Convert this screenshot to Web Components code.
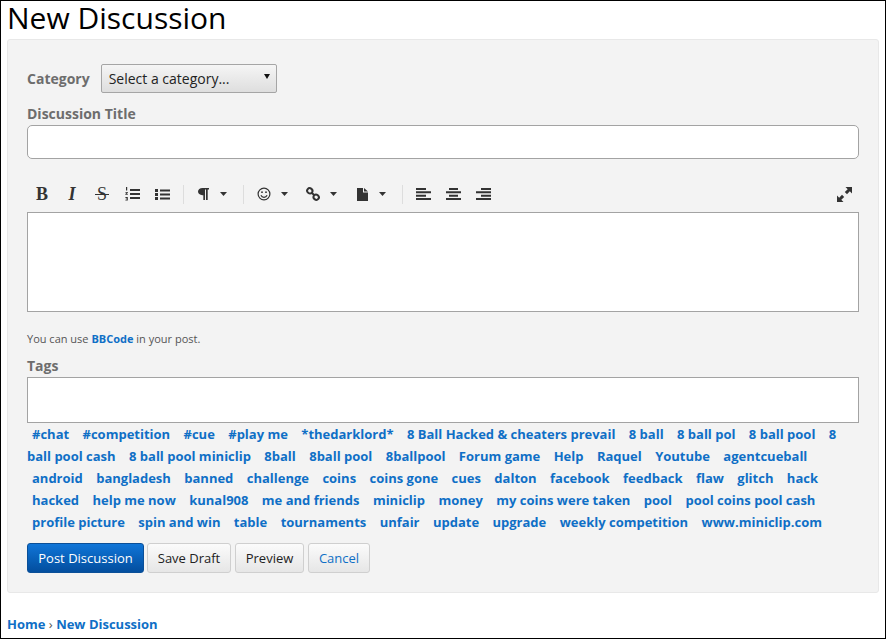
<!DOCTYPE html>
<html>
<head>
<meta charset="utf-8">
<title>New Discussion</title>
<style>
    html, body { margin: 0; height: 100%; }
    body { font-family: "Open Sans", sans-serif; color: #000; background: #fff; }
</style>
</head>
<body>
<discussion-page>
    <discussion-form>
        <category-picker></category-picker>
        <field-label>Discussion Title</field-label>
        <title-input></title-input>
        <editor-toolbar></editor-toolbar>
        <post-editor></post-editor>
        <bb-note></bb-note>
        <field-label>Tags</field-label>
        <tag-box></tag-box>
        <tag-list></tag-list>
        <form-buttons></form-buttons>
    </discussion-form>
    <bread-crumbs></bread-crumbs>
</discussion-page>
<script>
const LINK = '#0f6fc6';

class DiscussionPage extends HTMLElement {
    constructor() {
        super();
        this.attachShadow({ mode: 'open' });
        this.shadowRoot.innerHTML = `
            <style>
                :host { display: block; box-sizing: border-box; height: 639px; border: 1px solid #000; padding: 0 6px; overflow: hidden; }
                h1 { margin: 0; height: 38px; font-size: 30px; line-height: 33px; font-weight: 400; color: #000; }
            </style>
            <h1>New Discussion</h1>
            <slot></slot>`;
    }
}

class DiscussionForm extends HTMLElement {
    constructor() {
        super();
        this.attachShadow({ mode: 'open' });
        this.shadowRoot.innerHTML = `
            <style>
                :host { display: block; box-sizing: border-box; width: 872px; height: 554px; padding: 24px 19px 0; background: #f3f3f3; border: 1px solid #e8e8e8; border-radius: 3px; }
            </style>
            <slot></slot>`;
    }
}

class FieldLabel extends HTMLElement {
    constructor() {
        super();
        this.attachShadow({ mode: 'open' });
        this.shadowRoot.innerHTML = `
            <style>
                :host { display: block; margin-bottom: 1px; font-size: 14px; font-weight: 700; line-height: 20px; color: #6d6d6d; }
            </style>
            <slot></slot>`;
    }
}

class CategoryPicker extends HTMLElement {
    constructor() {
        super();
        this.attachShadow({ mode: 'open' });
        this.shadowRoot.innerHTML = `
            <style>
                :host { display: flex; align-items: center; gap: 11px; height: 29px; margin-bottom: 11px; font-size: 14px; }
                label { font-weight: 700; color: #6d6d6d; }
                .wrap { position: relative; display: block; width: 176px; height: 29px; }
                .wrap::after { content: ""; position: absolute; left: 163px; top: 10px; border: 3px solid transparent; border-top: 5px solid #111; border-bottom: 0; }
                select {
                    appearance: none; display: block;
                    box-sizing: border-box; width: 176px; height: 29px; padding: 0 7px;
                    font: 14px "Open Sans", sans-serif; color: #222;
                    background: linear-gradient(#f5f5f5, #dedede);
                    border: 1px solid #a5a5a5; border-radius: 2px;
                }
            </style>
            <label>Category</label>
            <span class="wrap"><select><option>Select a category...</option></select></span>`;
    }
}

class TitleInput extends HTMLElement {
    constructor() {
        super();
        this.attachShadow({ mode: 'open' });
        this.shadowRoot.innerHTML = `
            <style>
                :host { display: block; height: 34px; margin-bottom: 17px; }
                input { display: block; box-sizing: border-box; width: 100%; height: 34px; background: #fff; border: 1px solid #a3a3a3; border-radius: 5px; outline: 0; }
            </style>
            <input type="text">`;
    }
}

const caret = `<svg width="7" height="4" viewBox="0 0 7 4"><path d="M0 0h7L3.500 4z" fill="#333"/></svg>`;

const ICONS = {
    ol: `<svg width="15" height="14" viewBox="0 0 15 14" fill="#333"><path d="M5 2h10v2H5zM5 6h10v2H5zM5 10h10v2H5z"/><path d="M1 0h1.200v3.500H1zM.4 5h2.400v.9l-1.200 1h1.200v.8H.3V7l1.400-1.200H.4zM.4 10h2.400v3.600H.4v-.8h1.500v-.6H.8v-.7h1.100v-.6H.4z"/></svg>`,
    ul: `<svg width="15" height="11" viewBox="0 0 15 11" fill="#333"><path d="M5 .5h10v2H5zM5 4.500h10v2H5zM5 8.500h10v2H5z"/><path d="M0 0h3v3H0zM0 4h3v3H0zM0 8h3v3H0z"/></svg>`,
    para: `<svg width="11" height="12" viewBox="0 0 11 12" fill="#333"><path d="M4.500 0H11v1.600H9.700V12H8V1.600H7V12H5.300V7.200H4.500C1.800 7.200 0 5.700 0 3.600S1.800 0 4.500 0z"/></svg>`,
    smile: `<svg width="14" height="14" viewBox="0 0 14 14" fill="none" stroke="#333" stroke-width="1.200"><circle cx="7" cy="7" r="5.900"/><path d="M3.900 8.300C4.600 9.800 5.700 10.400 7 10.400s2.400-.6 3.100-2.100"/><circle cx="5" cy="5.200" r=".9" fill="#333" stroke="none"/><circle cx="9" cy="5.200" r=".9" fill="#333" stroke="none"/></svg>`,
    link: `<svg width="14" height="14" viewBox="0 0 14 14" fill="none" stroke="#333" stroke-width="2"><ellipse cx="3.800" cy="3.800" rx="2.700" ry="2.500" transform="rotate(40 3.800 3.800)"/><ellipse cx="10.200" cy="10.200" rx="2.700" ry="2.500" transform="rotate(40 10.200 10.200)"/><path d="M5.500 5.500l3 3"/></svg>`,
    file: `<svg width="11" height="13" viewBox="0 0 11 13" fill="#333"><path d="M0 0h6v4.500h5V13H0zM7 0l4 3.500H7z"/></svg>`,
    left: `<svg width="15" height="12" viewBox="0 0 15 12" fill="#333"><path d="M0 0h10v2H0zM0 3.300h15v2H0zM0 6.700h10v2H0zM0 10h15v2H0z"/></svg>`,
    center: `<svg width="15" height="12" viewBox="0 0 15 12" fill="#333"><path d="M3 0h9v2H3zM0 3.300h15v2H0zM3 6.700h9v2H3zM0 10h15v2H0z"/></svg>`,
    right: `<svg width="15" height="12" viewBox="0 0 15 12" fill="#333"><path d="M5 0h10v2H5zM0 3.300h15v2H0zM5 6.700h10v2H5zM0 10h15v2H0z"/></svg>`,
    expand: `<svg width="15" height="15" viewBox="0 0 15 15" fill="#333"><path d="M8.500 0H15v6.500L12.800 4.300 10 7.200 7.800 5l2.900-2.800zM6.500 15H0V8.500l2.200 2.200L5 7.800 7.200 10l-2.900 2.800z"/></svg>`
};

const drop = (icon, style = '') =>
    `<span class="d" style="${style}"><span class="ic">${icon}</span>${caret}</span>`;

class EditorToolbar extends HTMLElement {
    constructor() {
        super();
        this.attachShadow({ mode: 'open' });
        this.shadowRoot.innerHTML = `
            <style>
                :host { display: flex; align-items: center; height: 36px; color: #333; }
                .t { display: flex; align-items: center; justify-content: center; width: 30px; height: 20px; flex: none; }
                .g { font: 18px/20px "Liberation Serif", serif; color: #333; }
                .b { font-weight: 700; }
                .i { font-style: italic; font-weight: 700; }
                .s { position: relative; }
                .s::after { content: ""; position: absolute; left: 8px; top: 10px; width: 14px; height: 1px; background: #333; }
                .d { display: flex; align-items: center; height: 20px; width: 49px; flex: none; }
                .ic { display: flex; align-items: center; justify-content: center; width: 40px; margin-right: -3.500px; }
                .sep { width: 1px; height: 19px; background: #ddd; flex: none; }
                .sp { flex: 1; }
            </style>
            <span class="t g b">B</span>
            <span class="t g i">I</span>
            <span class="t g s">S</span>
            <span class="t">${ICONS.ol}</span>
            <span class="t">${ICONS.ul}</span>
            <span class="sep" style="margin-left:6px"></span>
            ${drop(ICONS.para, 'margin-left:-1px;margin-right:11px')}
            <span class="sep"></span>
            ${drop(ICONS.smile)}
            ${drop(ICONS.link)}
            ${drop(ICONS.file, 'margin-right:11px')}
            <span class="sep" style="margin-right:5px"></span>
            <span class="t">${ICONS.left}</span>
            <span class="t">${ICONS.center}</span>
            <span class="t">${ICONS.right}</span>
            <span class="sp"></span>
            <span class="t">${ICONS.expand}</span>`;
    }
}

class PostEditor extends HTMLElement {
    constructor() {
        super();
        this.attachShadow({ mode: 'open' });
        this.shadowRoot.innerHTML = `
            <style>
                :host { display: block; height: 100px; margin-bottom: 19px; }
                textarea { display: block; box-sizing: border-box; width: 100%; height: 100px; background: #fff; border: 1px solid #a3a3a3; border-radius: 0; outline: 0; resize: none; }
            </style>
            <textarea></textarea>`;
    }
}

class BbNote extends HTMLElement {
    constructor() {
        super();
        this.attachShadow({ mode: 'open' });
        this.shadowRoot.innerHTML = `
            <style>
                :host { display: block; height: 15px; margin-bottom: 10px; font-size: 11px; line-height: 15px; color: #555; }
                a { color: ${LINK}; font-weight: 700; text-decoration: none; }
            </style>
            You can use <a href="#">BBCode</a> in your post.`;
    }
}

class TagBox extends HTMLElement {
    constructor() {
        super();
        this.attachShadow({ mode: 'open' });
        this.shadowRoot.innerHTML = `
            <style>
                :host { display: block; box-sizing: border-box; height: 46px; background: #fff; border: 1px solid #a3a3a3; }
            </style>`;
    }
}

const TAGS = ['#chat', '#competition', '#cue', '#play me', '*thedarklord*', '8 Ball Hacked & cheaters prevail',
    '8 ball', '8 ball pol', '8 ball pool', '8 ball pool cash', '8 ball pool miniclip', '8ball', '8ball pool',
    '8ballpool', 'Forum game', 'Help', 'Raquel', 'Youtube', 'agentcueball', 'android', 'bangladesh', 'banned',
    'challenge', 'coins', 'coins gone', 'cues', 'dalton', 'facebook', 'feedback', 'flaw', 'glitch', 'hack',
    'hacked', 'help me now', 'kunal908', 'me and friends', 'miniclip', 'money', 'my coins were taken', 'pool',
    'pool coins pool cash', 'profile picture', 'spin and win', 'table', 'tournaments', 'unfair', 'update',
    'upgrade', 'weekly competition', 'www.miniclip.com'];

class TagList extends HTMLElement {
    constructor() {
        super();
        this.attachShadow({ mode: 'open' });
        const links = TAGS.map(t => `<a href="#">${t.replace('&', '&amp;')}</a>`).join('\n');
        this.shadowRoot.innerHTML = `
            <style>
                :host { display: block; height: 110px; margin-bottom: 10px; font-size: 13px; line-height: 22px; }
                a { padding: 0 5px; color: ${LINK}; font-weight: 700; text-decoration: none; }
            </style>
            ${links}`;
    }
}

class FormButtons extends HTMLElement {
    constructor() {
        super();
        this.attachShadow({ mode: 'open' });
        this.shadowRoot.innerHTML = `
            <style>
                :host { display: flex; gap: 4px; }
                button {
                    box-sizing: border-box; height: 30px; padding: 0;
                    font: 13px "Open Sans", sans-serif; color: #222;
                    background: linear-gradient(#fbfbfb, #e6e6e6);
                    border: 1px solid #cfcfcf; border-radius: 3px;
                }
                .primary { width: 117px; margin-right: -1px; color: #fff; background: linear-gradient(#0f75d8, #034e9e); border-color: #0a4f98; }
                .draft { width: 84px; }
                .preview { width: 69px; }
                .cancel { width: 62px; color: ${LINK}; }
            </style>
            <button class="primary">Post Discussion</button>
            <button class="draft">Save Draft</button>
            <button class="preview">Preview</button>
            <button class="cancel">Cancel</button>`;
    }
}

class BreadCrumbs extends HTMLElement {
    constructor() {
        super();
        this.attachShadow({ mode: 'open' });
        this.shadowRoot.innerHTML = `
            <style>
                :host { display: block; margin: 21px 0 0; font-size: 13px; line-height: 20px; color: #555; }
                a { color: ${LINK}; font-weight: 700; text-decoration: none; }
            </style>
            <a href="#">Home</a> › <a href="#">New Discussion</a>`;
    }
}

customElements.define('discussion-page', DiscussionPage);
customElements.define('discussion-form', DiscussionForm);
customElements.define('field-label', FieldLabel);
customElements.define('category-picker', CategoryPicker);
customElements.define('title-input', TitleInput);
customElements.define('editor-toolbar', EditorToolbar);
customElements.define('post-editor', PostEditor);
customElements.define('bb-note', BbNote);
customElements.define('tag-box', TagBox);
customElements.define('tag-list', TagList);
customElements.define('form-buttons', FormButtons);
customElements.define('bread-crumbs', BreadCrumbs);
</script>
</body>
</html>
